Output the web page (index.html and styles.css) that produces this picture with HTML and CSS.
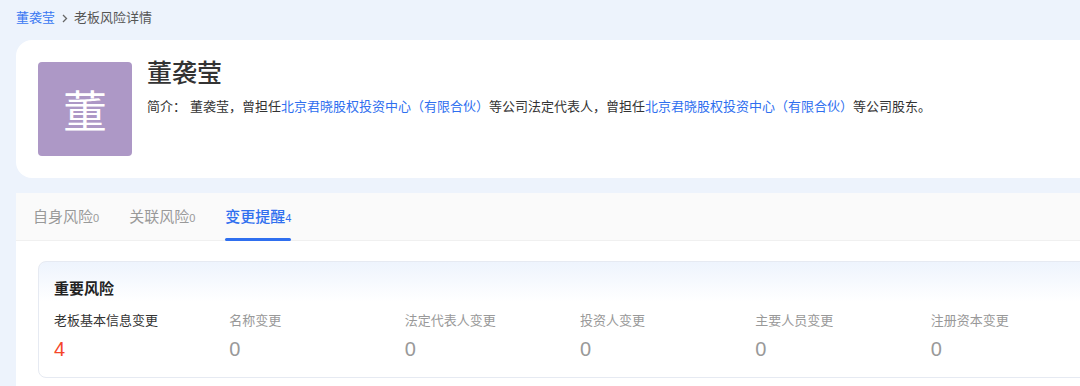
FILE: index.html
```html
<!DOCTYPE html>
<html lang="zh-CN">
<head>
    <meta charset="UTF-8">
    <meta name="viewport" content="width=device-width, initial-scale=1.0">
    <title>老板风险详情</title>
    <link rel="stylesheet" href="styles.css">
</head>
<body>
    <div class="page">
        <div class="breadcrumb">
            <a class="crumb-link">董袭莹</a>
            <svg class="crumb-sep" width="6" height="9" viewBox="0 0 6 9"><path d="M1 1l3.5 3.5L1 8" fill="none" stroke="#666" stroke-width="1.3"/></svg>
            <span class="crumb-current">老板风险详情</span>
        </div>

        <!-- boss profile -->
        <div class="profile">
            <div class="avatar">董</div>
            <div class="profile-info">
                <div class="name">董袭莹</div>
                <div class="intro">
                    <span class="intro-label">简介：</span>董袭莹，曾担任<a class="link">北京君晓股权投资中心（有限合伙）</a>等公司法定代表人，曾担任<a class="link">北京君晓股权投资中心（有限合伙）</a>等公司股东。
                </div>
            </div>
        </div>

        <!-- risk tabs -->
        <div class="risk-panel">
            <div class="tabs">
                <div class="tab">自身风险<span class="tab-count">0</span></div>
                <div class="tab">关联风险<span class="tab-count">0</span></div>
                <div class="tab active">变更提醒<span class="tab-count">4</span></div>
            </div>
            <div class="tab-body">
                <div class="risk-card">
                    <div class="risk-title">重要风险</div>
                    <div class="risk-grid">
                        <div class="risk-item">
                            <div class="risk-label strong">老板基本信息变更</div>
                            <div class="risk-num hot">4</div>
                        </div>
                        <div class="risk-item">
                            <div class="risk-label">名称变更</div>
                            <div class="risk-num">0</div>
                        </div>
                        <div class="risk-item">
                            <div class="risk-label">法定代表人变更</div>
                            <div class="risk-num">0</div>
                        </div>
                        <div class="risk-item">
                            <div class="risk-label">投资人变更</div>
                            <div class="risk-num">0</div>
                        </div>
                        <div class="risk-item">
                            <div class="risk-label">主要人员变更</div>
                            <div class="risk-num">0</div>
                        </div>
                        <div class="risk-item">
                            <div class="risk-label">注册资本变更</div>
                            <div class="risk-num">0</div>
                        </div>
                    </div>
                </div>
            </div>
        </div>
    </div>
</body>
</html>
```

FILE: styles.css
```css
html, body {
    overflow: hidden;
}
body {
    margin: 0;
    background-color: #edf3fc;
    color: #333;
    font-family: "Liberation Sans", "Noto Sans CJK SC", sans-serif;
}
.page {
    width: 1128px;
    padding: 8px 16px 0;
}
.breadcrumb {
    display: flex;
    align-items: center;
    font-size: 13px;
    line-height: 20px;
    margin-bottom: 12px;
}
.crumb-link {
    color: #3a78f2;
}
.crumb-sep {
    margin: 0 6px 0 7px;
}
.crumb-current {
    color: #555;
}
.profile {
    display: flex;
    background-color: #fff;
    border-radius: 16px;
    padding: 22px;
}
.avatar {
    width: 94px;
    height: 94px;
    flex-shrink: 0;
    border-radius: 4px;
    background-color: #ad98c6;
    color: #fff;
    font-size: 44px;
    display: flex;
    align-items: center;
    justify-content: center;
}
.profile-info {
    margin-left: 15px;
}
.name {
    font-size: 25px;
    font-weight: 500;
    line-height: 22px;
    color: #333;
}
.intro {
    margin-top: 13px;
    font-size: 13px;
    line-height: 20px;
    color: #333;
}
.intro-label {
    margin-right: 4px;
}
.link {
    color: #2f6fef;
}
.risk-panel {
    margin-top: 15px;
    background-color: #fff;
}
.tabs {
    display: flex;
    gap: 30px;
    height: 47px;
    padding-left: 17px;
    background-color: #fafafa;
    border-bottom: 1px solid #f0f0f0;
}
.tab {
    position: relative;
    font-size: 15px;
    line-height: 47px;
    color: #999;
}
.tab-count {
    font-size: 11px;
}
.tab.active {
    color: #2f6fef;
    font-weight: 500;
}
.tab.active::after {
    content: "";
    position: absolute;
    left: 0;
    right: 0;
    bottom: -1px;
    height: 3px;
    border-radius: 2px;
    background-color: #2f6fef;
}
.tab-body {
    padding: 20px 22px 20px;
}
.risk-card {
    border: 1px solid #e6eaf2;
    border-radius: 8px;
    padding: 17px 15px 14px;
    background: linear-gradient(#eef4fd, #fff 40px);
}
.risk-title {
    font-size: 15px;
    font-weight: bold;
    line-height: 20px;
    color: #222;
}
.risk-grid {
    display: grid;
    grid-template-columns: repeat(6, 1fr);
    margin-top: 13px;
}
.risk-label {
    font-size: 13px;
    line-height: 18px;
    color: #999;
}
.risk-label.strong {
    color: #333;
}
.risk-num {
    margin-top: 5px;
    font-size: 20px;
    line-height: 28px;
    color: #999;
}
.risk-num.hot {
    color: #f5462a;
}
```
